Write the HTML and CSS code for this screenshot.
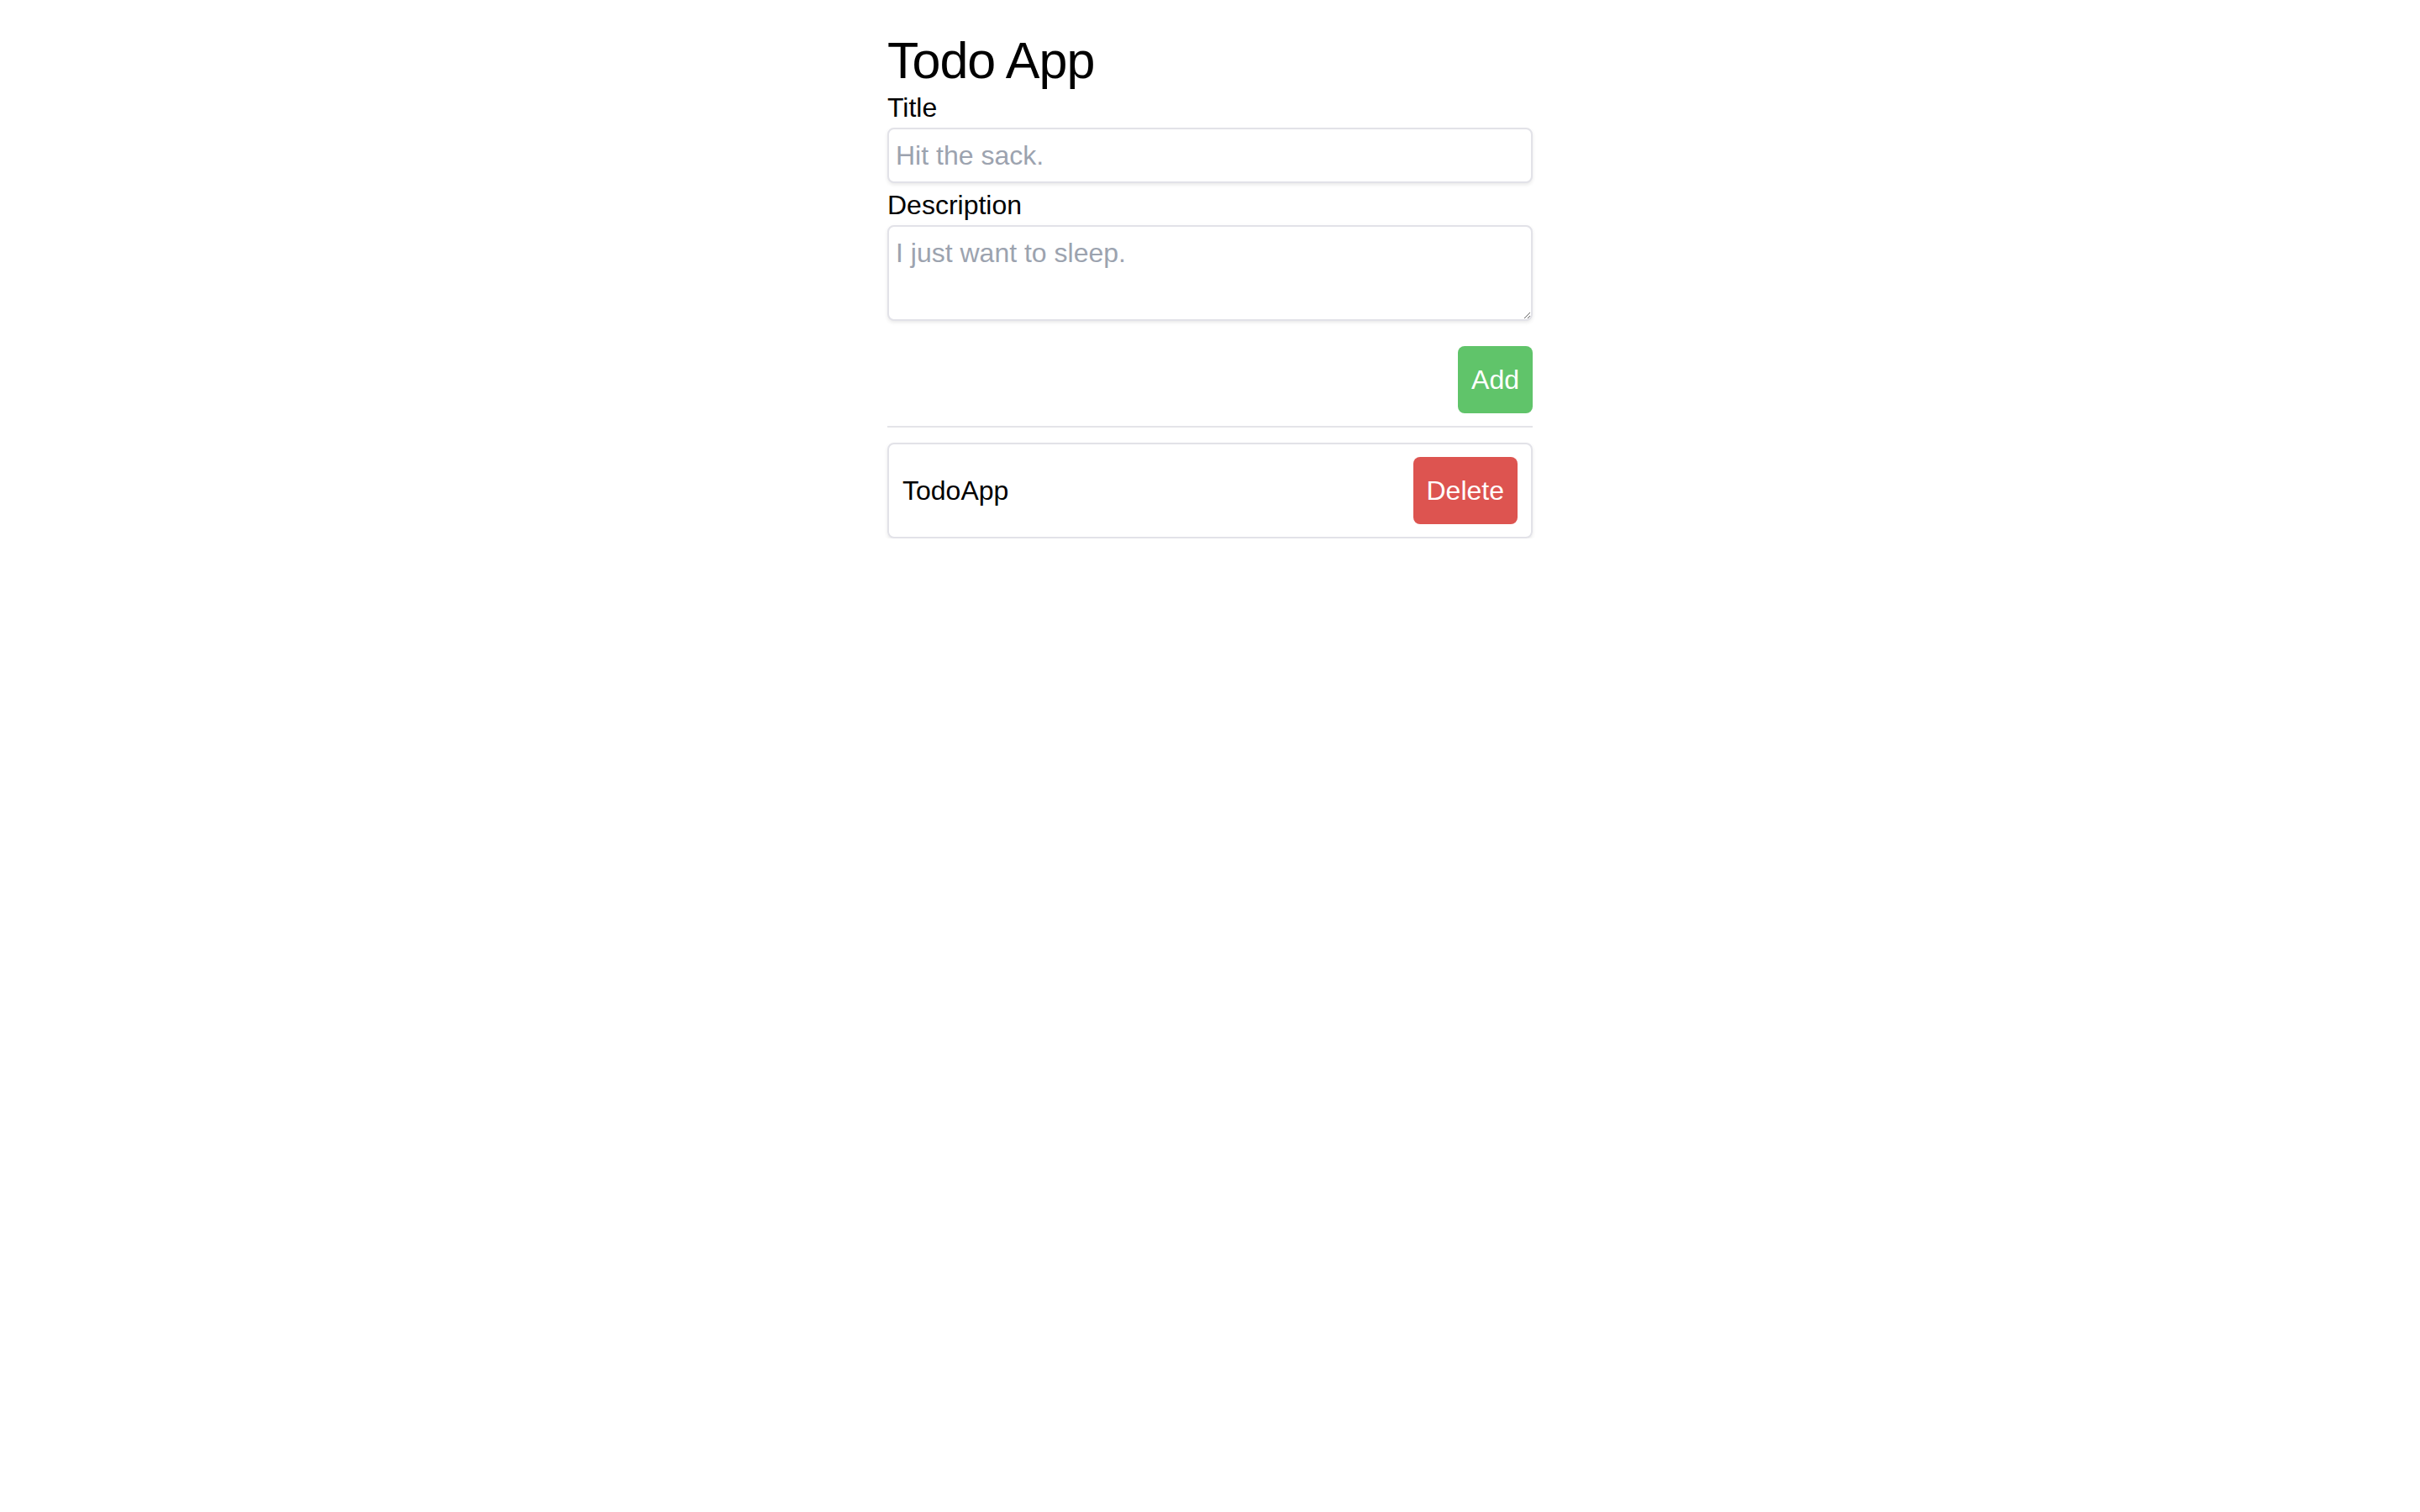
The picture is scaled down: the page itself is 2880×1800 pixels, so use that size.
FILE: index.html
```html
<!DOCTYPE html>
<html lang="en">
<head>
<meta charset="utf-8">
<title>Todo App</title>
<link rel="stylesheet" href="styles.css">
</head>
<body>
<main class="app">
  <h1 class="app-title">Todo App</h1>
  <form class="todo-form" onsubmit="return false;">
    <label class="field-label" for="title">Title</label>
    <input class="field-input" id="title" type="text" placeholder="Hit the sack.">
    <label class="field-label field-label-desc" for="desc">Description</label>
    <textarea class="field-input field-textarea" id="desc" rows="2" placeholder="I just want to sleep."></textarea>
    <div class="form-actions">
      <button class="btn btn-add" type="submit">Add</button>
    </div>
  </form>
  <hr class="divider">
  <ul class="todo-list">
    <li class="todo-item">
      <span class="todo-text">TodoApp</span>
      <button class="btn btn-delete" type="button">Delete</button>
    </li>
  </ul>
</main>
</body>
</html>
```

FILE: styles.css
```css
html, body {
  margin: 0;
  padding: 0;
  background: #ffffff;
}

body {
  font-family: "Liberation Sans", Arial, sans-serif;
  color: #000000;
}

.app {
  width: 768px;
  margin: 0 auto;
  padding-top: 40px;
}

.app-title {
  margin: 0;
  font-size: 61px;
  line-height: 64px;
  font-weight: 400;
  letter-spacing: -1px;
}

.todo-form {
  display: flex;
  flex-direction: column;
  margin: 0;
}

.field-label {
  display: block;
  font-size: 32px;
  line-height: 48px;
}

.field-label-desc {
  margin-top: 2px;
}

.field-input {
  display: block;
  box-sizing: border-box;
  width: 100%;
  height: 66px;
  margin: 0;
  padding: 7px 8px;
  border: 2px solid #e2e2e8;
  border-radius: 8px;
  box-shadow: 0 2px 4px rgba(0, 0, 0, 0.09);
  font-family: "Liberation Sans", Arial, sans-serif;
  font-size: 32px;
  line-height: 48px;
  color: #111111;
  background: #ffffff;
  outline: none;
}

.field-input::placeholder {
  color: #9ca3af;
}

.field-textarea {
  height: 114px;
  resize: vertical;
}

.form-actions {
  display: flex;
  justify-content: flex-end;
  margin-top: 30px;
}

.btn {
  border: none;
  border-radius: 8px;
  padding: 16px;
  font-family: "Liberation Sans", Arial, sans-serif;
  font-size: 32px;
  line-height: 48px;
  color: #ffffff;
  cursor: pointer;
}

.btn-add {
  background: #60c46a;
}

.btn-delete {
  background: #dd5450;
}

.divider {
  border: 0;
  height: 2px;
  margin: 15px 0 0 0;
  background: #e4e4e9;
}

.todo-list {
  list-style: none;
  margin: 18px 0 0 0;
  padding: 0;
}

.todo-item {
  display: flex;
  align-items: center;
  justify-content: space-between;
  padding: 15px 16px;
  border: 2px solid #e2e2e8;
  border-radius: 8px;
  box-shadow: 0 2px 4px rgba(0, 0, 0, 0.09);
}

.todo-text {
  font-size: 32px;
  line-height: 48px;
}
```
